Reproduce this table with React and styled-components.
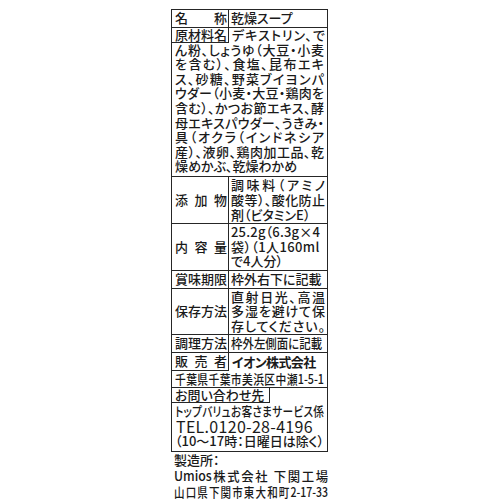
import React from "react";
import styled, { createGlobalStyle, css } from "styled-components";

const GlobalStyle = createGlobalStyle`
  html, body {
    margin: 0;
    padding: 0;
    background: #ffffff;
  }
  body {
    font-family: "Noto Sans CJK JP", "Noto Sans", sans-serif;
    font-weight: 500;
    color: #1a1a1a;
    font-feature-settings: "palt";
  }
`;

const Page = styled.div`
  width: 500px;
  height: 500px;
  padding: 9px 0 0 171px;
  box-sizing: border-box;
  overflow: hidden;
`;

const Table = styled.div`
  width: 157px;
  box-sizing: border-box;
  border: 1px solid #262626;
  font-size: 13px;
  line-height: 14.6px;
`;

const Row = styled.div`
  display: flex;
  border-bottom: 1px solid #262626;
`;

const LabelCell = styled.div`
  flex: none;
  width: 57px;
  box-sizing: border-box;
  border-right: 1px solid #262626;
  padding: 0 1px 0 3px;
  display: flex;
  align-items: center;
  justify-content: space-between;
`;

const ValueCell = styled.div`
  flex: 1;
  min-width: 0;
  padding: 1px 2px;
`;

const Block = styled.div`
  border-bottom: ${(p) => (p.$last ? "0" : "1px solid #262626")};
  padding-bottom: ${(p) => p.$pb || 0}px;
`;

const HeadLine = styled.div`
  display: flex;
  align-items: center;
`;

const BoxLabel = styled.div`
  flex: none;
  width: ${(p) => p.$w}px;
  height: ${(p) => p.$h || 15}px;
  box-sizing: border-box;
  border-right: 1px solid #262626;
  border-bottom: 1px solid #262626;
  padding: 0 1px 0 3px;
  display: flex;
  align-items: center;
  justify-content: ${(p) => (p.$spread ? "space-between" : "flex-start")};
  line-height: 14px;
`;

const Body = styled.div`
  padding: 0 3px 0 3px;
`;

const Line = styled.div`
  white-space: nowrap;
  text-align: left;
  text-align-last: ${(p) => (p.$fill ? "justify" : "left")};
  letter-spacing: ${(p) => p.$ls || 0}px;
  line-height: ${(p) => (p.$lh ? `${p.$lh}px` : "inherit")};
  ${(p) =>
    p.$sx &&
    css`
      width: ${100 / p.$sx}%;
      transform: scaleX(${p.$sx});
      transform-origin: 0 50%;
    `}
`;

const HeadText = styled(Line)`
  flex: 1;
  padding: 0 2px 0 3px;
  font-weight: ${(p) => (p.$bold ? 700 : 500)};
`;

const Tel = styled.div`
  font-size: 16px;
  font-weight: 400;
  line-height: 16px;
  letter-spacing: 0.3px;
  padding-left: 4px;
`;

const Maker = styled.div`
  width: 157px;
  padding-left: 3px;
  box-sizing: border-box;
  font-size: 13px;
  line-height: 16px;
`;

const Spaced = ({ text }) => [...text].map((c, i) => <span key={i}>{c}</span>);

const ingredients = [
  "ん粉、しょうゆ（大豆・小麦",
  "を含む）、食塩、昆布エキ",
  "ス、砂糖、野菜ブイヨンパ",
  "ウダー（小麦・大豆・鶏肉を",
  "含む）、かつお節エキス、酵",
  "母エキスパウダー、うきみ・",
  "具（オクラ（インドネシア",
  "産）、液卵、鶏肉加工品、乾",
];

const MultiRow = ({ label, lines }) => (
  <Row>
    <LabelCell>
      <Spaced text={label} />
    </LabelCell>
    <ValueCell>
      {lines.map((l, i) => (
        <Line key={i} $fill={l.fill} $ls={l.ls} $sx={l.sx}>
          {l.text}
        </Line>
      ))}
    </ValueCell>
  </Row>
);

export default function App() {
  return (
    <Page>
      <GlobalStyle />
      <Table>
        <MultiRow label="名称" lines={[{ text: "乾燥スープ" }]} />

        <Block $pb={2.5}>
          <HeadLine>
            <BoxLabel $w={57} $spread>
              <Spaced text="原材料名" />
            </BoxLabel>
            <HeadText $fill>デキストリン、で</HeadText>
          </HeadLine>
          <Body>
            {ingredients.map((l) => (
              <Line key={l} $fill>
                {l}
              </Line>
            ))}
            <Line>燥めかぶ、乾燥わかめ</Line>
          </Body>
        </Block>

        <MultiRow
          label="添加物"
          lines={[
            { text: "調味料（アミノ", fill: true },
            { text: "酸等）、酸化防止", fill: true },
            { text: "剤（ビタミンE）" },
          ]}
        />
        <MultiRow
          label="内容量"
          lines={[
            { text: "25.2g（6.3g×4", ls: 0.2 },
            { text: "袋）（1人160ml", ls: 0.4 },
            { text: "で4人分）" },
          ]}
        />
        <MultiRow label="賞味期限" lines={[{ text: "枠外右下に記載" }]} />
        <MultiRow
          label="保存方法"
          lines={[
            { text: "直射日光、高温", fill: true },
            { text: "多湿を避けて保", fill: true },
            { text: "存してください。", fill: true },
          ]}
        />
        <MultiRow label="調理方法" lines={[{ text: "枠外左側面に記載", sx: 0.88 }]} />

        <Block>
          <HeadLine>
            <BoxLabel $w={57} $h={18} $spread>
              <Spaced text="販売者" />
            </BoxLabel>
            <HeadText $bold $ls={-0.6}>
              イオン株式会社
            </HeadText>
          </HeadLine>
          <Body>
            <Line $fill $sx={0.83} $lh={16.5}>
              千葉県千葉市美浜区中瀬1-5-1
            </Line>
          </Body>
        </Block>

        <Block $last $pb={1.5}>
          <HeadLine>
            <BoxLabel $w={98}>お問い合わせ先</BoxLabel>
          </HeadLine>
          <Body>
            <Line $fill $sx={0.82} $lh={15}>
              トップバリュお客さまサービス係
            </Line>
          </Body>
          <Tel>TEL.0120-28-4196</Tel>
          <Body>
            <Line $fill>（10〜17時：日曜日は除く）</Line>
          </Body>
        </Block>
      </Table>
      <Maker>
        <Line>製造所：</Line>
        <Line $fill $sx={0.95}>
          Umios株式会社 下関工場
        </Line>
        <Line $fill $sx={0.81}>
          山口県下関市東大和町2-17-33
        </Line>
      </Maker>
    </Page>
  );
}
